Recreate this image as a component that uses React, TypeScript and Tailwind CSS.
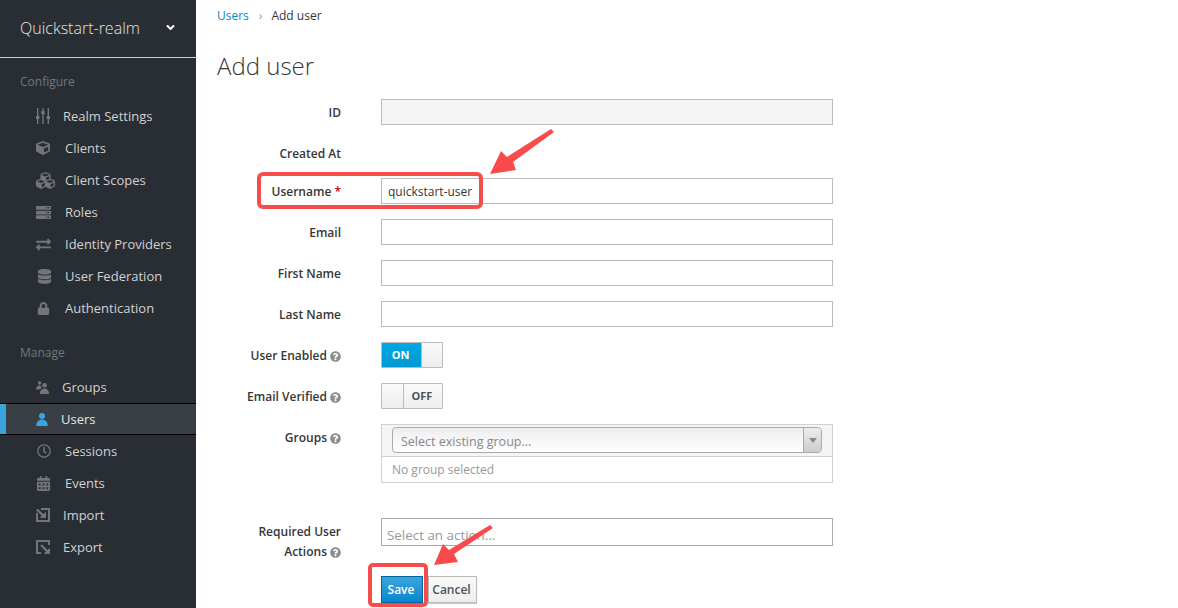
import React from "react";
import {
  FaAngleDown,
  FaCalendarAlt,
  FaCube,
  FaCubes,
  FaDatabase,
  FaExchangeAlt,
  FaLock,
  FaQuestionCircle,
  FaRegClock,
  FaServer,
} from "react-icons/fa";

function SlidersIcon() {
  return (
    <svg width="14" height="16" viewBox="0 0 14 16" fill="currentColor">
      <rect x="1" y="0" width="1.4" height="16" />
      <rect x="6.3" y="0" width="1.4" height="16" />
      <rect x="11.6" y="0" width="1.4" height="16" />
      <rect x="0" y="8" width="3.4" height="3" />
      <rect x="5.3" y="3" width="3.4" height="3" />
      <rect x="10.6" y="8" width="3.4" height="3" />
    </svg>
  );
}

function GroupsIcon() {
  return (
    <svg width="13" height="13" viewBox="0 0 13 13" fill="currentColor">
      <circle cx="3.6" cy="2" r="1.8" />
      <path d="M0 8.5C0 5.8 1.5 4.4 3.6 4.4C4.4 4.4 5 4.6 5.5 5C5 6 5.2 6.8 5.6 7.4C4.4 7.8 3.5 8.2 3 8.5Z" />
      <circle cx="8.6" cy="4.3" r="2.3" />
      <path d="M3.8 13C3.8 9.6 5.8 7.4 8.6 7.4C11.2 7.4 13 9.6 13 13Z" />
    </svg>
  );
}

function UserIcon() {
  return (
    <svg width="12" height="13" viewBox="0 0 12 13" fill="currentColor">
      <circle cx="6" cy="3" r="3" />
      <path d="M0.3 13C0.3 9 2.6 6.6 6 6.6C9.4 6.6 11.7 9 11.7 13Z" />
    </svg>
  );
}

function ImportIcon() {
  return (
    <svg width="14" height="14" viewBox="0 0 14 14" fill="none" stroke="currentColor">
      <path d="M1 5V13H13V1H5" strokeWidth="2" />
      <path d="M1 1.5L7.5 8" strokeWidth="2.4" />
      <path d="M9.5 4.5V9.5H4.5Z" fill="currentColor" strokeWidth="1" />
    </svg>
  );
}

function ExportIcon() {
  return (
    <svg width="14" height="14" viewBox="0 0 14 14" fill="none" stroke="currentColor">
      <path d="M13 5V1H1V13H5" strokeWidth="2" />
      <path d="M5 5L11 11" strokeWidth="2.4" />
      <path d="M13.5 8.5V13.5H8.5Z" fill="currentColor" strokeWidth="1" />
    </svg>
  );
}

const configureItems = [
  { label: "Realm Settings", icon: <SlidersIcon />, width: "w-[27px]" },
  { label: "Clients", icon: <FaCube size={14} />, width: "w-[29px]" },
  { label: "Client Scopes", icon: <FaCubes size={19} />, width: "w-[29px]" },
  { label: "Roles", icon: <FaServer size={15} />, width: "w-[29px]" },
  { label: "Identity Providers", icon: <FaExchangeAlt size={15} />, width: "w-[29px]" },
  { label: "User Federation", icon: <FaDatabase size={15} className="ml-[1px]" />, width: "w-[29px]" },
  { label: "Authentication", icon: <FaLock size={13} className="ml-[1px]" />, width: "w-[29px]" },
];

const manageItems = [
  { label: "Groups", icon: <GroupsIcon />, width: "w-[26px]" },
  { label: "Users", icon: <UserIcon />, width: "w-[25px]", active: true },
  { label: "Sessions", icon: <FaRegClock size={14} className="ml-[1px]" />, width: "w-[29px]" },
  { label: "Events", icon: <FaCalendarAlt size={15} />, width: "w-[29px]" },
  { label: "Import", icon: <ImportIcon />, width: "w-[27px]" },
  { label: "Export", icon: <ExportIcon />, width: "w-[27px]" },
];

function NavItem({
  label,
  icon,
  width,
  active,
}: {
  label: string;
  icon: React.ReactNode;
  width: string;
  active?: boolean;
}) {
  if (active) {
    return (
      <div className="h-8 flex items-center pl-[36px] relative bg-[#393f44] border-y border-black text-[#e3e4e5]">
        <div className="absolute left-0 top-0 bottom-0 w-[6px] bg-[#39a5dc]" />
        <span className={`${width} flex items-center text-[#39a5dc]`}>{icon}</span>
        <span className="pt-[2px]">{label}</span>
      </div>
    );
  }
  return (
    <div className="h-8 flex items-center pl-[36px] text-[#d1d1d1]">
      <span className={`${width} flex items-center text-[#72767b]`}>{icon}</span>
      <span className="pt-[2px]">{label}</span>
    </div>
  );
}

function Sidebar() {
  return (
    <div className="w-[196px] shrink-0 h-full bg-[#292e34] text-[13px]">
      <div className="h-[58px] flex items-center justify-between pl-[20px] pr-[19px] pb-[2px] border-b border-[#d1d1d1] text-[16px] font-light text-[#e3e4e5]">
        <span>Quickstart-realm</span>
        <FaAngleDown size={13} className="text-white" />
      </div>
      <div className="mt-[7px] mb-[3px] h-8 flex items-center pl-[20px] pt-[2px] text-[12px] text-[#72767b]">Configure</div>
      {configureItems.map((item) => (
        <NavItem key={item.label} {...item} />
      ))}
      <div className="mt-[12px] mb-[3px] h-8 flex items-center pl-[20px] pt-[2px] text-[12px] text-[#72767b]">Manage</div>
      {manageItems.map((item) => (
        <NavItem key={item.label} {...item} />
      ))}
    </div>
  );
}

function HelpIcon() {
  return <FaQuestionCircle size={11} className="inline ml-[3px] mb-[1px] text-[#8b8d8f]" />;
}

function Label({ text, help, required }: { text: string; help?: boolean; required?: boolean }) {
  return (
    <div className="w-[124px] mr-[40px] pt-[2px] shrink-0 text-right font-semibold text-[12px] text-[#363636]">
      {text}
      {required && <span className="text-[#c00]"> *</span>}
      {help && <HelpIcon />}
    </div>
  );
}

function TextRow({ label, value, required }: { label: string; value?: string; required?: boolean }) {
  return (
    <div className="flex items-center h-[26px] mb-[15px]">
      <Label text={label} required={required} />
      <div className="w-[452px] h-[26px] border border-[#bbb] bg-white flex items-center pl-[6px] pt-[2px] text-[12px] text-[#363636]">
        {value}
      </div>
    </div>
  );
}

function Form() {
  return (
    <div>
      <div className="flex items-center h-[26px] mb-[15px]">
        <Label text="ID" />
        <div className="w-[452px] h-[26px] border border-[#bbb] bg-[#f5f5f5]" />
      </div>
      <div className="flex items-center h-[26px] mb-[12px]">
        <Label text="Created At" />
      </div>
      <TextRow label="Username" value="quickstart-user" required />
      <TextRow label="Email" />
      <TextRow label="First Name" />
      <TextRow label="Last Name" />

      <div className="flex items-center h-[26px] mb-[15px]">
        <Label text="User Enabled" help />
        <div className="w-[62px] h-[26px] flex border border-[#bbb] rounded-[1px] text-[11px] font-bold">
          <div className="w-[39px] flex items-center justify-center pr-[2px] text-white bg-gradient-to-b from-[#00a8e1] to-[#0099d3]">
            ON
          </div>
          <div className="flex-1 border-l border-[#bbb] bg-gradient-to-b from-[#fafafa] to-[#ededed]" />
        </div>
      </div>

      <div className="flex items-center h-[26px]">
        <Label text="Email Verified" help />
        <div className="w-[62px] h-[26px] flex border border-[#bbb] rounded-[1px] text-[11px] font-bold text-[#4d5258]">
          <div className="w-[22px] border-r border-[#bbb] bg-gradient-to-b from-[#fafafa] to-[#ededed]" />
          <div className="flex-1 flex items-center justify-center pr-[2px] bg-gradient-to-b from-[#fafafa] to-[#ededed]">
            OFF
          </div>
        </div>
      </div>

      <div className="flex items-start mt-[15px]">
        <div className="mt-[3px]">
          <Label text="Groups" help />
        </div>
        <div className="w-[452px] h-[59px] border border-[#d1d1d1] bg-white">
          <div className="h-[32px] bg-[#f5f5f5] border-b border-[#d1d1d1] pl-[10px] pr-[10px] pt-[2px]">
            <div className="h-[26px] flex border border-[#aaa] rounded-[4px] bg-gradient-to-b from-[#eee] to-white text-[12.5px] text-[#888]">
              <div className="flex-1 flex items-center pl-[8px] pt-[4px]">Select existing group...</div>
              <div className="w-[18px] flex items-center justify-center border-l border-[#aaa] rounded-r-[4px] bg-gradient-to-b from-[#eee] to-[#ccc]">
                <div className="w-0 h-0 border-x-[4px] border-x-transparent border-t-[5px] border-t-[#888]" />
              </div>
            </div>
          </div>
          <div className="h-[25px] flex items-center pl-[10px] text-[12px] text-[#999]">No group selected</div>
        </div>
      </div>

      <div className="flex items-start mt-[35px]">
        <div className="w-[124px] mr-[40px] shrink-0 text-right font-semibold text-[12px] leading-[20px] text-[#363636] mt-[4px]">
          Required User
          <br />
          Actions
          <HelpIcon />
        </div>
        <div className="w-[452px] h-[28px] border border-[#aaa] bg-white flex items-center pl-[5px] pt-[7px] text-[13.4px] text-[#999]">
          Select an action...
        </div>
      </div>

      <div className="flex mt-[14px] ml-[164px] text-[12px]">
        <div className="w-[42px] h-[27px] flex items-center justify-center pr-[2px] border border-[#00659c] text-white font-semibold bg-gradient-to-b from-[#39a5dc] to-[#0088ce]">
          Save
        </div>
        <div className="ml-[5px] w-[49px] h-[27px] flex items-center justify-center pr-[2px] border border-[#bbb] text-[#4d5258] font-semibold bg-gradient-to-b from-[#fafafa] to-[#ededed] shadow-[0_1px_1px_rgba(3,3,3,0.2)]">
          Cancel
        </div>
      </div>
    </div>
  );
}

// red marks drawn over the screenshot
function Annotations() {
  return (
    <>
      <div className="absolute left-[257px] top-[172px] w-[226px] h-[37px] border-[4px] border-[#f64c4c] rounded-[6px]" />
      <div className="absolute left-[368px] top-[563px] w-[60px] h-[44px] border-[4px] border-[#f64c4c] rounded-[5px]" />
      <svg className="absolute left-0 top-0 pointer-events-none" width="1178" height="608">
        <polygon points="490,174 501,151 507,157 551,129 554,132 513,162 516,170" fill="#f94b4b" />
        <polygon points="434,565 443,544 449,550 490,525 493,528 454,554 458,562" fill="#f94b4b" />
      </svg>
    </>
  );
}

export default function App() {
  return (
    <div
      className="relative w-[1178px] h-[608px] flex overflow-hidden bg-white"
      style={{ fontFamily: '"Open Sans", "Liberation Sans", sans-serif' }}
    >
      <Sidebar />
      <div className="flex-1 pl-[21px]">
        <div className="h-[32px] flex items-center text-[12px] text-[#363636]">
          <span className="text-[#0088ce]">Users</span>
          <span className="ml-[10px] mr-[9px] text-[#9c9c9c]">›</span>
          <span>Add user</span>
        </div>
        <h1 className="mt-[17px] mb-[17px] h-[33px] leading-[33px] text-[24px] font-light text-[#363636]">Add user</h1>
        <Form />
      </div>
      <Annotations />
    </div>
  );
}
